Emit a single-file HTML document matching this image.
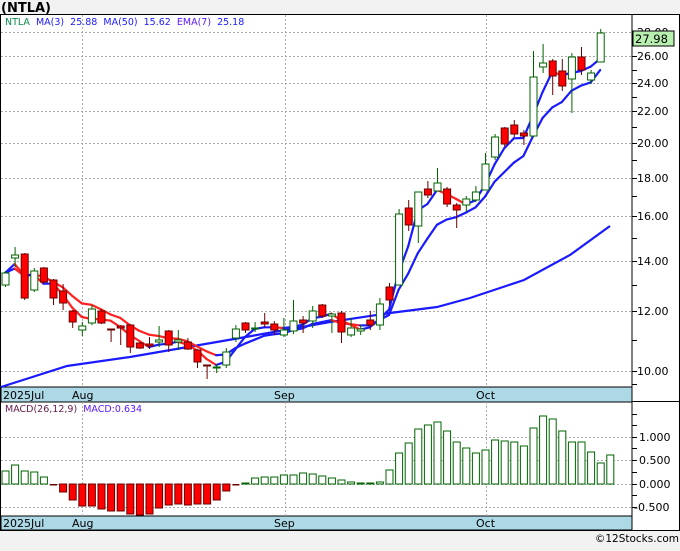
<!DOCTYPE html>
<html><head><meta charset="utf-8"><style>
body{margin:0;background:#f2f2f2;width:680px;height:546px;overflow:hidden;font-family:"Liberation Sans",sans-serif}
</style></head><body>
<svg id="s" width="680" height="546" xmlns="http://www.w3.org/2000/svg" font-family="DejaVu Sans, sans-serif">
<rect x="0" y="0" width="680" height="546" fill="#f2f2f2"/>
<text x="1" y="12" font-size="13" font-weight="bold" fill="#000">(NTLA)</text>
<rect x="0.5" y="14.5" width="679" height="516" fill="#fff" stroke="#000"/>
<rect x="1" y="387" width="631" height="15" fill="#add8e6" stroke="#000"/>
<rect x="1" y="516" width="631" height="14" fill="#add8e6" stroke="#000"/>
<line x1="632" y1="14" x2="632" y2="530" stroke="#000"/>
<line x1="632" y1="401.5" x2="680" y2="401.5" stroke="#000"/>
<g id="grid" stroke="#aaa" stroke-dasharray="2,2" stroke-width="1"></g>
<g id="main"></g>
<g font-size="11" fill="#000">
<text x="3" y="399">2025Jul</text><text x="72" y="399">Aug</text><text x="274" y="399">Sep</text><text x="476" y="399">Oct</text>
<text x="3" y="527">2025Jul</text><text x="72" y="527">Aug</text><text x="274" y="527">Sep</text><text x="476" y="527">Oct</text>
<text x="637" y="36">28.00</text><text x="637" y="60">26.00</text><text x="637" y="87">24.00</text><text x="637" y="115">22.00</text><text x="637" y="147">20.00</text><text x="637" y="182">18.00</text><text x="637" y="220">16.00</text><text x="637" y="265">14.00</text><text x="637" y="315">12.00</text><text x="637" y="375">10.00</text>
<text x="639" y="441">1.000</text><text x="639" y="464">0.500</text><text x="639" y="488">0.000</text><text x="634" y="511">-0.500</text>
</g>
<rect x="633" y="31" width="41" height="15" fill="#b8f0b0" stroke="#000"/>
<text x="635" y="43" font-size="11.5" fill="#000">27.98</text>
<text x="5" y="25" font-size="9.5" fill="#1a1aff" style="white-space:pre"><tspan fill="#0a8a4a">NTLA</tspan>  MA(3)  25.88  MA(50)  15.62  <tspan fill="#5a1aff">EMA(7)</tspan>  25.18</text>
<text x="5" y="412" font-size="9.5" fill="#661a4a" style="white-space:pre">MACD(26,12,9)  <tspan fill="#5a1aff">MACD:0.634</tspan></text>
<text x="679" y="542" font-size="10.5" fill="#000" text-anchor="end">©12Stocks.com</text>
</svg>
<script>
var NS="http://www.w3.org/2000/svg";
function el(p,t,a){var e=document.createElementNS(NS,t);for(var k in a)e.setAttribute(k,a[k]);p.appendChild(e);return e;}
var g=document.getElementById('grid'),m=document.getElementById('main');
[32,56,83,111,143,178,216,261,311,371,437,460,484,507].forEach(function(y){el(g,'line',{x1:1,x2:632,y1:y+.5,y2:y+.5});});
[82,285,486].forEach(function(x){el(g,'line',{x1:x+.5,x2:x+.5,y1:15,y2:387});el(g,'line',{x1:x+.5,x2:x+.5,y1:402,y2:516});});
[32,44,56,70,83,97,111,127,143,160,178,196,216,238,261,285,311,340,371,384].forEach(function(y){el(m,'line',{x1:632,x2:637,y1:y+.5,y2:y+.5,stroke:'#000'});});
[414,425,437,448,460,472,484,495,507].forEach(function(y){el(m,'line',{x1:632,x2:637,y1:y+.5,y2:y+.5,stroke:'#000'});});
var C=[[285,273,271,287,'g'],[258,255,247,267,'g'],[254,298,253,300,'r'],[290,271,268,292,'g'],[268,282,267,283,'r'],[280,298,279,305,'r'],[291,303,284,310,'r'],[311,322,310,328,'r'],[330,326,322,336,'g'],[323,309,305,325,'g'],[311,323,309,324,'r'],[329,330,329,342,'r'],[326,328,325,345,'r'],[325,347,324,353,'r'],[343,348,342,349,'r'],[344,346,337,349,'r'],[342,340,326,347,'g'],[331,345,330,352,'r'],[342,340,330,350,'g'],[342,349,338,350,'r'],[350,362,349,368,'r'],[365,366,365,379,'r'],[368,367,364,373,'g'],[365,352,348,368,'g'],[338,329,325,342,'g'],[323,330,322,333,'r'],[329,328,322,332,'g'],[322,324,313,327,'r'],[324,330,321,335,'r'],[335,330,318,337,'g'],[331,321,300,334,'g'],[320,323,316,333,'r'],[321,311,306,328,'g'],[305,316,304,318,'r'],[316,314,313,333,'g'],[313,332,311,343,'r'],[335,328,318,337,'g'],[331,329,325,335,'g'],[320,325,311,330,'r'],[325,304,298,330,'g'],[287,300,283,305,'r'],[285,214,209,285,'g'],[208,225,200,231,'r'],[226,192,192,243,'g'],[189,195,181,198,'r'],[191,183,168,191,'g'],[189,204,187,207,'r'],[205,210,203,228,'r'],[205,199,196,212,'g'],[200,192,186,202,'g'],[190,164,153,190,'g'],[157,137,134,160,'g'],[128,144,127,147,'r'],[125,134,120,137,'r'],[133,136,130,145,'r'],[136,77,51,137,'g'],[67,63,44,73,'g'],[61,76,59,95,'r'],[71,86,59,91,'r'],[79,57,53,113,'g'],[57,70,47,75,'r'],[80,73,70,84,'g'],[62,33,29,62,'g']];
var X=function(i){return 5+i*9.6;};
el(m,'polyline',{points:'1,387 23,380 67,366 130,357 240,338 330,322 390,313 437,307 470,298 524,280 570,255 610,226',fill:'none',stroke:'#1a1aff','stroke-width':2.2});
var cl=C.map(function(c){return c[1];});
var ma=[],em=[],e=cl[0];
for(var i=0;i<cl.length;i++){var a=cl.slice(Math.max(0,i-2),i+1);ma.push(a.reduce(function(s,v){return s+v;},0)/a.length);e=i==0?cl[0]:e+(cl[i]-e)*0.25;em.push(e);}
[ma,em].forEach(function(L){for(var i=1;i<L.length;i++){el(m,'line',{x1:X(i-1),y1:L[i-1],x2:X(i),y2:L[i],stroke:L[i]>L[i-1]+0.3?'#ff2020':'#1a1aff','stroke-width':2.2,'stroke-linecap':'round'});}});
C.forEach(function(c,i){var x=X(i),g=c[4]=='g';var col=g?'#006400':'#6a0000';
el(m,'line',{x1:x+.5,x2:x+.5,y1:c[2],y2:c[3],stroke:col});
var t=Math.min(c[0],c[1]),h=Math.max(1,Math.abs(c[0]-c[1]));
el(m,'rect',{x:x-3,y:t,width:7,height:h,fill:g?'#fff':'#f00',stroke:col});});
var M=[471,465,471,472,477,485,492,500,506,506,509,511,511,514,515,514,508,505,504,505,504,504,500,491,486,483,478,477,477,475,475,473,474,476,478,480,482,483,483,482,470,453,443,429,425,422,431,442,448,453,450,440,441,442,446,428,416,419,431,442,442,452,463,455];
M.forEach(function(y,i){var x=X(i);if(y<484){el(m,'rect',{x:x-3,y:y,width:7,height:484-y,fill:'#fff',stroke:'#006400'});}else if(y<=486){el(m,'rect',{x:x-3,y:484,width:7,height:1.5,fill:'#6a0000'});}else{el(m,'rect',{x:x-3,y:484,width:7,height:y-484,fill:'#f00',stroke:'#6a0000'});}});
</script>
</body></html>
